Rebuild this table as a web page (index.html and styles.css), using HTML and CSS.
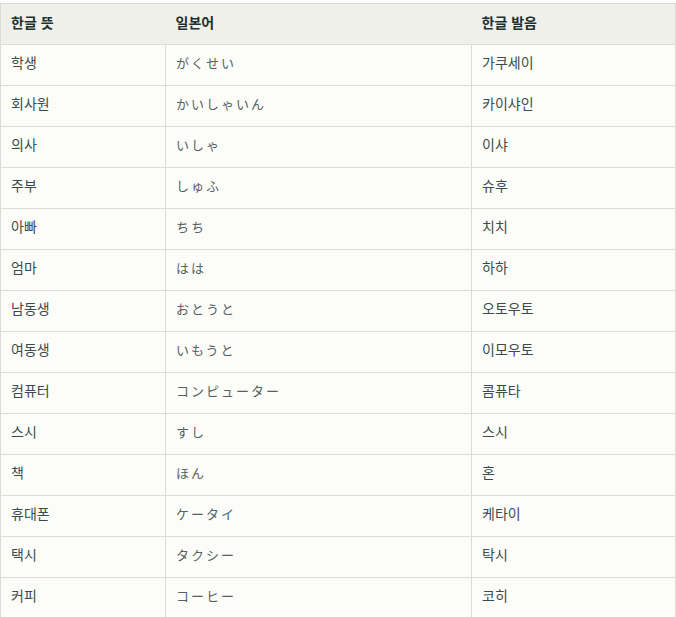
FILE: index.html
```
<!DOCTYPE html>
<html lang="ko">
<head>
<meta charset="utf-8">
<link rel="stylesheet" href="styles.css">
</head>
<body>
<table class="vocab">
  <colgroup><col class="c1"><col class="c2"><col class="c3"></colgroup>
  <thead>
    <tr><th>한글 뜻</th><th>일본어</th><th>한글 발음</th></tr>
  </thead>
  <tbody>
    <tr><td>학생</td><td class="jp">がくせい</td><td>가쿠세이</td></tr>
    <tr><td>회사원</td><td class="jp">かいしゃいん</td><td>카이샤인</td></tr>
    <tr><td>의사</td><td class="jp">いしゃ</td><td>이샤</td></tr>
    <tr><td>주부</td><td class="jp">しゅふ</td><td>슈후</td></tr>
    <tr><td>아빠</td><td class="jp">ちち</td><td>치치</td></tr>
    <tr><td>엄마</td><td class="jp">はは</td><td>하하</td></tr>
    <tr><td>남동생</td><td class="jp">おとうと</td><td>오토우토</td></tr>
    <tr><td>여동생</td><td class="jp">いもうと</td><td>이모우토</td></tr>
    <tr><td>컴퓨터</td><td class="jp">コンピューター</td><td>콤퓨타</td></tr>
    <tr><td>스시</td><td class="jp">すし</td><td>스시</td></tr>
    <tr><td>책</td><td class="jp">ほん</td><td>혼</td></tr>
    <tr><td>휴대폰</td><td class="jp">ケータイ</td><td>케타이</td></tr>
    <tr><td>택시</td><td class="jp">タクシー</td><td>탁시</td></tr>
    <tr><td>커피</td><td class="jp">コーヒー</td><td>코히</td></tr>
  </tbody>
</table>
</body>
</html>
```
FILE: styles.css
```
html, body {
  margin: 0;
  padding: 0;
  background: #ffffff;
}
body {
  padding-top: 3px;
  font-family: "Noto Sans CJK KR", "Noto Sans CJK JP", sans-serif;
  font-size: 14px;
  color: #3a4b4b;
}
.vocab {
  width: 675px;
  table-layout: fixed;
  border-collapse: collapse;
  border: 1px solid #dcdcd4;
  background: #fcfdf9;
}
.c1 { width: 165px; }
.c2 { width: 306px; }
.c3 { width: 204px; }
.vocab th {
  height: 36px;
  padding: 0 10px 4px 10px;
  text-align: left;
  font-weight: 700;
  color: #1e3131;
  background: #f0f0eb;
  border-bottom: 1px solid #dcdcd4;
}
.vocab td {
  height: 34px;
  padding: 0 10px 6px 10px;
  border: 1px solid #dcdcd4;
  vertical-align: middle;
}
.vocab .jp {
  letter-spacing: 2px;
  font-size: 13px;
  color: #556262;
}
```
